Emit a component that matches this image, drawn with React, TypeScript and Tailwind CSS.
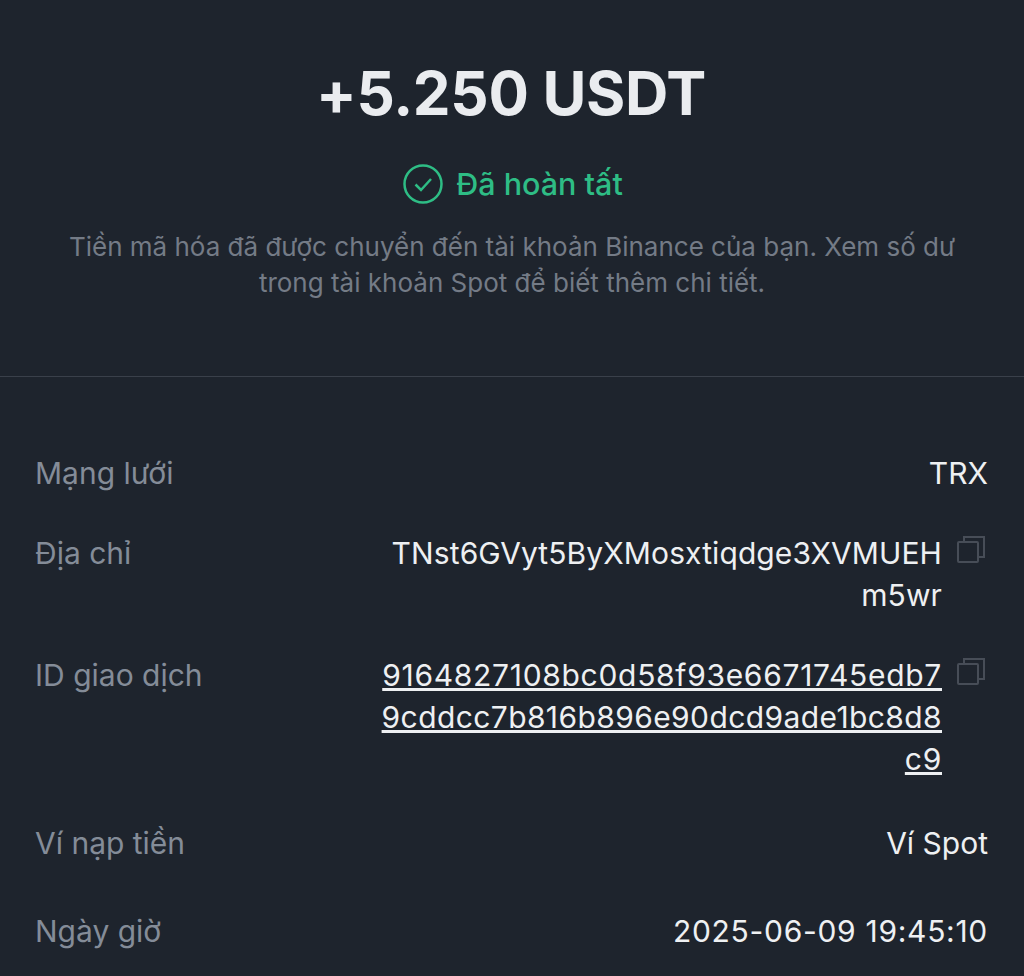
import React from 'react';

function CopyIcon() {
  return (
    <svg width="30" height="30" viewBox="0 0 30 30" fill="none" stroke="#474d57" strokeWidth="2" className="shrink-0 mt-[2px] mr-[2px]">
      <rect x="2" y="8" width="20" height="20" rx="1" />
      <path d="M8 8V3h20v20h-6" />
    </svg>
  );
}

function Row({ label, children, className }: { label: string; children: React.ReactNode; className?: string }) {
  return (
    <div className={`flex justify-between items-start ${className ?? ''}`}>
      <span className="text-[#848c98]">{label}</span>
      {children}
    </div>
  );
}

export default function App() {
  return (
    <div className="w-[1024px] h-[976px] overflow-hidden bg-[#1e242d] font-['Inter',sans-serif]">
      <div className="flex flex-col items-center pt-[57px] h-[377px] border-b border-[#3a404a]">
        <h1 className="text-[60px] leading-[72px] font-bold tracking-[-0.3px] text-[#eaecef] -translate-x-[1px]">+5.250 USDT</h1>
        <div className="flex items-center gap-[13px] mt-[35px] translate-x-[1px]">
          <svg width="40" height="40" viewBox="0 0 40 40" fill="none" stroke="#2ebd85" strokeWidth="2.5">
            <circle cx="20" cy="20" r="18.5" />
            <path d="M12.5 20.5l5.5 5.5 10-11" />
          </svg>
          <span className="text-[30.5px] leading-[40px] font-medium text-[#2ebd85]">Đã hoàn tất</span>
        </div>
        <p className="mt-[25px] w-[920px] text-center text-[26px] leading-[36px] text-[#747b86]">
          Tiền mã hóa đã được chuyển đến tài khoản Binance của bạn. Xem số dư trong tài khoản Spot để biết thêm chi tiết.
        </p>
      </div>
      <div className="pl-[35px] pr-[36px] pt-[75px] text-[30px] leading-[42px]">
        <Row label="Mạng lưới">
          <span className="text-[#eef0f2]">TRX</span>
        </Row>
        <Row label="Địa chỉ" className="mt-[38px]">
          <div className="flex gap-[14px]">
            <span className="text-right text-[#eef0f2] tracking-[0.1px]">
              TNst6GVyt5ByXMosxtiqdge3XVMUEH
              <br />
              m5wr
            </span>
            <CopyIcon />
          </div>
        </Row>
        <Row label="ID giao dịch" className="mt-[38px]">
          <div className="flex gap-[14px]">
            <span className="text-right text-[#eef0f2] underline tracking-[0.7px]">
              9164827108bc0d58f93e6671745edb7
              <br />
              <span className="tracking-[0.4px]">9cddcc7b816b896e90dcd9ade1bc8d8</span>
              <br />
              c9
            </span>
            <CopyIcon />
          </div>
        </Row>
        <Row label="Ví nạp tiền" className="mt-[42px]">
          <span className="text-[#eef0f2]">Ví Spot</span>
        </Row>
        <Row label="Ngày giờ" className="mt-[46px]">
          <span className="text-[#eef0f2] tracking-[0.7px]">2025-06-09 19:45:10</span>
        </Row>
      </div>
    </div>
  );
}
